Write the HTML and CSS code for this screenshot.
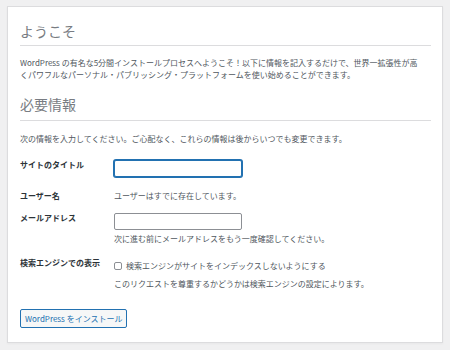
FILE: index.html
```html
<!DOCTYPE html>
<html lang="ja">
<head>
    <meta charset="UTF-8">
    <meta name="viewport" content="width=device-width, initial-scale=1.0">
    <title>WordPress › インストール</title>
    <link rel="stylesheet" href="styles.css">
</head>
<body>
    <div class="setup-card">
        <h1>ようこそ</h1>
        <p class="intro">WordPress の有名な5分間インストールプロセスへようこそ！以下に情報を記入するだけで、世界一拡張性が高くパワフルなパーソナル・パブリッシング・プラットフォームを使い始めることができます。</p>

        <h2>必要情報</h2>
        <p class="lead">次の情報を入力してください。ご心配なく、これらの情報は後からいつでも変更できます。</p>

        <form class="setup-form" onsubmit="return false;">
            <div class="form-row row-title">
                <label for="weblog_title">サイトのタイトル</label>
                <div class="field">
                    <input type="text" id="weblog_title" class="text-input is-focused">
                </div>
            </div>

            <div class="form-row row-user">
                <label>ユーザー名</label>
                <div class="field">
                    <span class="field-text">ユーザーはすでに存在しています。</span>
                </div>
            </div>

            <div class="form-row row-email">
                <label for="admin_email">メールアドレス</label>
                <div class="field">
                    <input type="email" id="admin_email" class="text-input">
                    <p class="hint">次に進む前にメールアドレスをもう一度確認してください。</p>
                </div>
            </div>

            <div class="form-row row-search">
                <label>検索エンジンでの表示</label>
                <div class="field">
                    <label class="check-label" for="blog_public">
                        <input type="checkbox" id="blog_public" class="check">
                        検索エンジンがサイトをインデックスしないようにする
                    </label>
                    <p class="hint hint-search">このリクエストを尊重するかどうかは検索エンジンの設定によります。</p>
                </div>
            </div>

            <button type="submit" class="install-btn">WordPress をインストール</button>
        </form>
    </div>
</body>
</html>
```

FILE: styles.css
```css
* {
    box-sizing: border-box;
}

body {
    margin: 0;
    padding: 6px 7px 7px;
    background: #f0f0f1;
    font-family: "Noto Sans CJK JP", sans-serif;
    font-size: 8px;
    line-height: 12px;
    color: #50575e;
}

.setup-card {
    background: #fff;
    border: 1px solid #dcdcde;
    box-shadow: 0 1px 2px rgba(0,0,0,0.04);
    padding: 15px 11px 14px 12px;
}

h1, h2 {
    margin: 0;
    font-size: 14px;
    line-height: 18px;
    font-weight: 400;
    color: #787c82;
    border-bottom: 1px solid #dcdcde;
}

h1 {
    padding-bottom: 5px;
}

h2 {
    margin-top: 14px;
    padding-bottom: 7px;
}

p {
    margin: 0;
}

.intro {
    margin-top: 11px;
    max-width: 400px;
}

.lead {
    margin-top: 12px;
}

/* form rows */
.form-row {
    display: grid;
    grid-template-columns: 94px 1fr;
    align-items: start;
}

.form-row > label {
    font-weight: 700;
    color: #2c3338;
}

.row-title { margin-top: 14px; }
.row-user { margin-top: 13px; }
.row-email { margin-top: 10px; }
.row-search { margin-top: 12px; }

.text-input {
    display: block;
    width: 128px;
    height: 17px;
    margin-top: 1px;
    padding: 0 4px;
    border: 1px solid #8c8f94;
    border-radius: 2px;
    background: #fff;
    font: inherit;
    outline: none;
}

.text-input.is-focused {
    border-color: #2271b1;
    box-shadow: 0 0 0 1px #2271b1;
}

.hint {
    margin-top: 3px;
}

.check-label {
    display: flex;
    align-items: center;
    margin-top: 3px;
}

.check {
    appearance: none;
    width: 8px;
    height: 8px;
    margin: 0 4px 0 0;
    border: 1px solid #8c8f94;
    border-radius: 2px;
    background: #fff;
}

.hint-search {
    margin-top: 6px;
}

.install-btn {
    display: block;
    margin-top: 19px;
    height: 19px;
    padding: 0 4px;
    border: 1px solid #2271b1;
    border-radius: 2px;
    background: #f6f7f7;
    color: #2271b1;
    font: inherit;
    cursor: pointer;
}
```
